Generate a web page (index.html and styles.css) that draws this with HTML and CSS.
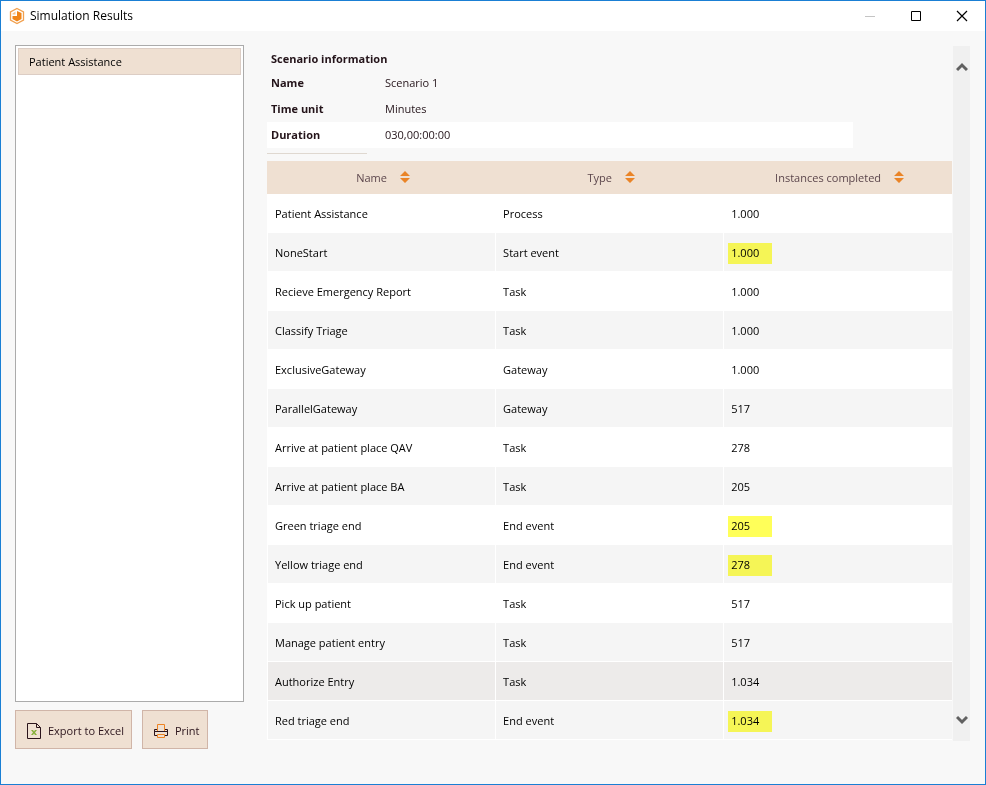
FILE: index.html
```html
<!DOCTYPE html>
<html lang="en">
<head>
<meta charset="utf-8">
<meta name="viewport" content="width=device-width, initial-scale=1">
<title>Simulation Results</title>
<link rel="stylesheet" href="styles.css">
</head>
<body>
<header class="titlebar">
  <svg class="app-icon" width="16" height="18" viewBox="0 0 16 18" aria-hidden="true">
    <path d="M8 1.500 L14.500 5 V13 L8 16.500 L1.500 13 V5 Z" fill="#fff" stroke="#f2a04e" stroke-width="1.300"/>
    <path d="M8 9 V4 L12.500 6 V12 L8 14.500 L3.500 12 V9 Z" fill="#f08519"/>
    <path d="M3.500 6.500 L6.500 4.500 V7.500 H3.500 Z" fill="#f8c48e"/>
  </svg>
  <h1>Simulation Results</h1>
  <div class="window-controls">
    <button type="button" aria-label="Minimize" disabled><svg width="12" height="12" viewBox="0 0 12 12"><path d="M1 6.500H11" stroke="#c4c4c4"/></svg></button>
    <button type="button" aria-label="Maximize"><svg width="12" height="12" viewBox="0 0 12 12"><path d="M1.500 1.500H10.500V10.500H1.500Z" fill="none" stroke="#000"/></svg></button>
    <button type="button" aria-label="Close"><svg width="12" height="12" viewBox="0 0 12 12"><path d="M1 1L11 11M11 1L1 11" stroke="#000" stroke-width="1.200"/></svg></button>
  </div>
</header>
<div class="content">
  <aside class="sidebar">
    <ul class="process-list">
      <li><button type="button" class="process">Patient Assistance</button></li>
    </ul>
    <div class="actions">
      <button type="button" class="action">
        <svg width="14" height="16" viewBox="0 0 14 16" aria-hidden="true">
          <path d="M0.500 0.500H9.500L13.500 4.500V15.500H0.500Z" fill="none" stroke="#2b141c"/>
          <path d="M9.500 0.500V4.500H13.500" fill="none" stroke="#2b141c"/>
          <path d="M4 7H6L7 8.500L8 7H10L8 9.500L10 12H8L7 10.500L6 12H4L6 9.500Z" fill="#86b03a"/>
        </svg>
        <span>Export to Excel</span>
      </button>
      <button type="button" class="action">
        <svg width="14" height="14" viewBox="0 0 14 14" aria-hidden="true">
          <path d="M3 11.500H0.500V5.500H3M11 5.500H13.500V11.500H11M0 7.500H14" fill="none" stroke="#2b141c"/>
          <path d="M3.500 7V0.500H10.500V7M3.500 10.500H10.500V13.500H3.500Z" fill="none" stroke="#ee8322"/>
        </svg>
        <span>Print</span>
      </button>
    </div>
  </aside>
  <main class="results">
    <div class="report">
      <h2>Scenario information</h2>
      <dl class="info">
        <div><dt>Name</dt><dd>Scenario 1</dd></div>
        <div><dt>Time unit</dt><dd>Minutes</dd></div>
        <div class="current"><dt>Duration</dt><dd>030,00:00:00</dd></div>
      </dl>
      <hr>
      <table>
        <thead>
          <tr>
            <th scope="col"><button type="button">Name<svg width="10" height="12" viewBox="0 0 10 12" aria-hidden="true"><path d="M0 5L5 0L10 5ZM0 7H10L5 12Z" fill="#ea8427"/></svg></button></th>
            <th scope="col"><button type="button">Type<svg width="10" height="12" viewBox="0 0 10 12" aria-hidden="true"><path d="M0 5L5 0L10 5ZM0 7H10L5 12Z" fill="#ea8427"/></svg></button></th>
            <th scope="col"><button type="button">Instances completed<svg width="10" height="12" viewBox="0 0 10 12" aria-hidden="true"><path d="M0 5L5 0L10 5ZM0 7H10L5 12Z" fill="#ea8427"/></svg></button></th>
          </tr>
        </thead>
        <tbody>
          <tr><td>Patient Assistance</td><td>Process</td><td>1.000</td></tr>
          <tr><td>NoneStart</td><td>Start event</td><td><mark>1.000</mark></td></tr>
          <tr><td>Recieve Emergency Report</td><td>Task</td><td>1.000</td></tr>
          <tr><td>Classify Triage</td><td>Task</td><td>1.000</td></tr>
          <tr><td>ExclusiveGateway</td><td>Gateway</td><td>1.000</td></tr>
          <tr><td>ParallelGateway</td><td>Gateway</td><td>517</td></tr>
          <tr><td>Arrive at patient place QAV</td><td>Task</td><td>278</td></tr>
          <tr><td>Arrive at patient place BA</td><td>Task</td><td>205</td></tr>
          <tr><td>Green triage end</td><td>End event</td><td><mark>205</mark></td></tr>
          <tr><td>Yellow triage end</td><td>End event</td><td><mark>278</mark></td></tr>
          <tr><td>Pick up patient</td><td>Task</td><td>517</td></tr>
          <tr><td>Manage patient entry</td><td>Task</td><td>517</td></tr>
          <tr class="hovered"><td>Authorize Entry</td><td>Task</td><td>1.034</td></tr>
          <tr><td>Red triage end</td><td>End event</td><td><mark>1.034</mark></td></tr>
        </tbody>
      </table>
    </div>
    <div class="scrollbar">
      <button type="button" aria-label="Scroll up"><svg width="12" height="10" viewBox="0 0 12 10"><path d="M1 8L6 3L11 8" fill="none" stroke="#606060" stroke-width="3"/></svg></button>
      <button type="button" aria-label="Scroll down"><svg width="12" height="10" viewBox="0 0 12 10"><path d="M1 2L6 7L11 2" fill="none" stroke="#606060" stroke-width="3"/></svg></button>
    </div>
  </main>
</div>
</body>
</html>
```
FILE: styles.css
```css
* { box-sizing: border-box; }

body {
  margin: 0;
  min-height: 100vh;
  display: flex;
  flex-direction: column;
  border: 1px solid #1a7fd4;
  background: #f8f8f8;
  color: #000;
  font: 11px/16px "Open Sans", "Noto Sans", sans-serif;
}

button {
  margin: 0;
  padding: 0;
  border: 0;
  background: none;
  color: inherit;
  font: inherit;
}

svg { display: block; flex: none; }

.titlebar {
  display: flex;
  align-items: center;
  height: 30px;
  padding-left: 8px;
  background: #fff;
}

.titlebar h1 {
  margin: 0 0 0 5px;
  font-size: 12px;
  font-weight: 400;
}

.window-controls {
  display: flex;
  align-self: stretch;
  margin-left: auto;
}

.window-controls button {
  display: grid;
  place-items: center;
  width: 46px;
}

.content {
  flex: 1;
  display: grid;
  grid-template-columns: 229px 1fr;
  gap: 23px;
  padding: 14px 15px 35px 14px;
}

.sidebar {
  display: flex;
  flex-direction: column;
  gap: 8px;
}

.process-list {
  flex: 1;
  margin: 0;
  padding: 2px;
  list-style: none;
  border: 1px solid #ababab;
  background: #fff;
}

.process {
  display: block;
  width: 100%;
  height: 27px;
  padding: 0 10px;
  border: 1px solid #dccdc4;
  background: #efe0d2;
  text-align: left;
}

.actions { display: flex; gap: 10px; }

.action {
  display: flex;
  align-items: center;
  gap: 7px;
  height: 39px;
  padding: 2px 7px 0 11px;
  border: 1px solid #d0b5a8;
  background: #efe0d2;
  color: #2b141c;
}

.results {
  display: flex;
  gap: 1px;
  padding: 1px 0 8px;
}

.report { flex: 1; min-width: 0; }

.report h2 {
  margin: 0;
  padding: 5px 4px 3px;
  font-size: 11px;
  line-height: 16px;
  font-weight: 700;
  color: #24141a;
}

.info { margin: 0 99px 0 0; color: #24141a; }

.info div {
  display: grid;
  grid-template-columns: 114px 1fr;
  padding: 5px 4px;
}

.info dt { font-weight: 700; }
.info dd { margin: 0; }
.info .current { background: #fff; }

hr {
  width: 100px;
  height: 1px;
  margin: 5px 0 7px;
  border: 0;
  background: #dfd8d0;
}

table {
  width: 100%;
  table-layout: fixed;
  border-collapse: separate;
  border-spacing: 0;
}

th {
  height: 33px;
  padding: 0 0 0 4px;
  background: #efe0d2;
  color: #5c464c;
  font-weight: 400;
}

th:not(:last-child) { width: 33.3%; }

th button {
  display: inline-flex;
  align-items: center;
  gap: 13px;
  vertical-align: middle;
}

th svg { margin-bottom: 2px; }

td {
  height: 39px;
  padding: 2px 7px 0;
  border-left: 1px solid #fff;
  border-bottom: 1px solid #fff;
  background: #fff;
}

tbody tr:nth-child(even) td { background: #f5f5f5; }
tbody .hovered td { background: #edebea; }

mark {
  display: block;
  width: 44px;
  margin-left: -3px;
  padding: 2px 3px 3px;
  background: #ffff59;
  color: inherit;
  mix-blend-mode: multiply;
}

.scrollbar {
  display: flex;
  flex-direction: column;
  justify-content: space-between;
  width: 17px;
  padding: 16px 0;
  background: #f0f0f0;
}

.scrollbar button {
  display: grid;
  place-items: center;
}
```
